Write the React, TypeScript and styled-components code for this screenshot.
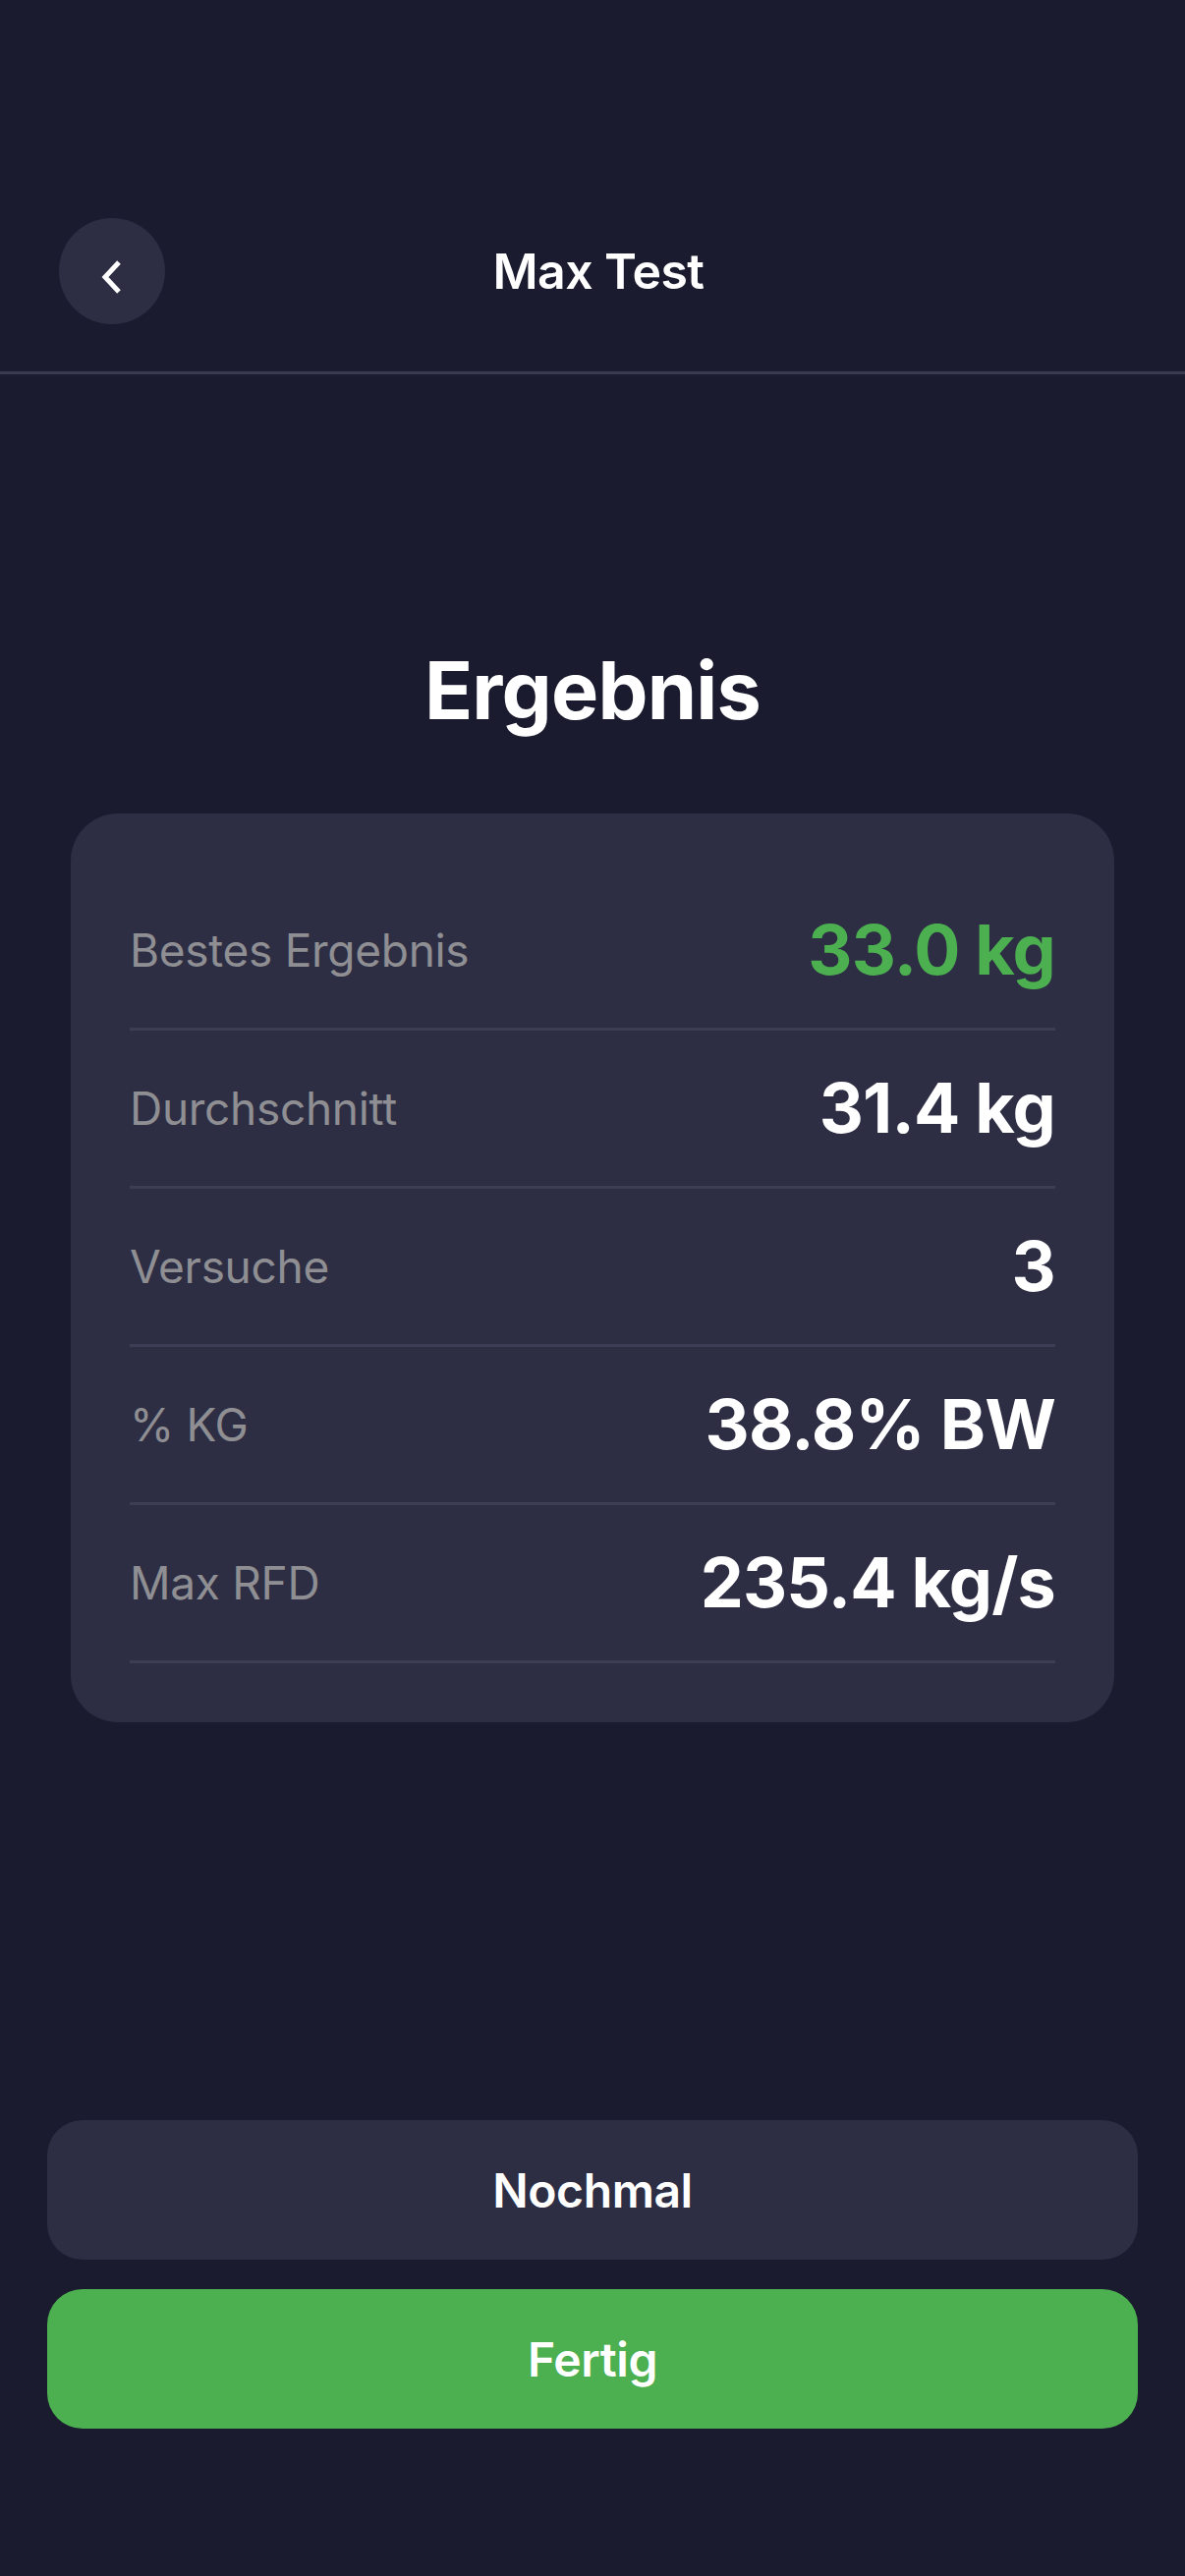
import React from "react";
import styled, { createGlobalStyle } from "styled-components";

type Stat = {
  label: string;
  value: string;
  highlight?: boolean;
};

const stats: Stat[] = [
  { label: "Bestes Ergebnis", value: "33.0 kg", highlight: true },
  { label: "Durchschnitt", value: "31.4 kg" },
  { label: "Versuche", value: "3" },
  { label: "% KG", value: "38.8% BW" },
  { label: "Max RFD", value: "235.4 kg/s" },
];

function App() {
  return (
    <>
      <GlobalStyle />
      <Screen>
        <Header>
          <BackButton aria-label="Zurück">
            <svg width="30" height="40" viewBox="0 0 30 40">
              <polyline
                points="22,5 8,20 22,35"
                fill="none"
                stroke="#ffffff"
                strokeWidth="5"
                strokeLinecap="butt"
                strokeLinejoin="miter"
              />
            </svg>
          </BackButton>
          <HeaderTitle>Max Test</HeaderTitle>
          <HeaderSpacer />
        </Header>

        <Main>
          <Title>Ergebnis</Title>
          <Card>
            {stats.map((stat, idx) => (
              <Row key={idx}>
                <Label>{stat.label}</Label>
                <Value highlight={stat.highlight}>{stat.value}</Value>
              </Row>
            ))}
          </Card>
        </Main>

        <Actions>
          <ActionButton variant="secondary">Nochmal</ActionButton>
          <ActionButton variant="primary">Fertig</ActionButton>
        </Actions>
      </Screen>
    </>
  );
}

const GlobalStyle = createGlobalStyle`
  html, body {
    margin: 0;
    padding: 0;
    background: #1a1b2e;
  }
  body {
    font-family: Inter, "Noto Sans", "Liberation Sans", sans-serif;
    color: #ffffff;
  }
  * {
    box-sizing: border-box;
  }
`;

const Screen = styled.div`
  width: 1206px;
  height: 2622px;
  display: flex;
  flex-direction: column;
  background: #1a1b2e;
  padding-top: 186px;
`;

const Header = styled.header`
  display: flex;
  align-items: center;
  justify-content: space-between;
  padding: 36px 60px 48px 60px;
  border-bottom: 3px solid #3a3b50;
`;

const BackButton = styled.button`
  width: 108px;
  height: 108px;
  border-radius: 50%;
  border: none;
  background: #2d2e44;
  display: flex;
  align-items: center;
  justify-content: center;
  padding: 12px 0 0 0;
  cursor: pointer;
`;

const HeaderTitle = styled.h1`
  margin: 0;
  font-size: 50px;
  font-weight: 600;
  letter-spacing: -0.6px;
  color: #ffffff;
`;

const HeaderSpacer = styled.div`
  width: 96px;
  height: 108px;
`;

const Main = styled.main`
  flex: 1;
  display: flex;
  flex-direction: column;
  align-items: center;
  padding: 274px 72px 0 72px;
`;

const Title = styled.h2`
  margin: 0;
  font-size: 81px;
  line-height: 1.2;
  font-weight: 700;
  letter-spacing: -0.8px;
  color: #ffffff;
`;

const Card = styled.section`
  margin-top: 76px;
  width: 100%;
  background: #2d2e44;
  border-radius: 48px;
  padding: 60px;
  display: flex;
  flex-direction: column;
`;

const Row = styled.div`
  height: 161px;
  display: flex;
  align-items: center;
  justify-content: space-between;
  border-bottom: 3px solid #3d3e55;
`;

const Label = styled.span`
  font-size: 46px;
  line-height: 1.2;
  font-weight: 400;
  color: #8e8e93;
  letter-spacing: -0.3px;
`;

const Value = styled.span<{ highlight?: boolean }>`
  font-size: 70px;
  line-height: 1.2;
  font-weight: 700;
  letter-spacing: -0.8px;
  color: ${(props) => (props.highlight ? "#4caf50" : "#ffffff")};
`;

const Actions = styled.div`
  display: flex;
  flex-direction: column;
  gap: 30px;
  padding: 0 48px 150px 48px;
`;

const ActionButton = styled.button<{ variant: "primary" | "secondary" }>`
  height: 142px;
  width: 100%;
  border: none;
  border-radius: 36px;
  font-family: Inter, "Noto Sans", "Liberation Sans", sans-serif;
  font-size: 48px;
  font-weight: 600;
  letter-spacing: -0.4px;
  color: #ffffff;
  background: ${(props) => (props.variant === "primary" ? "#4caf50" : "#2d2e44")};
  cursor: pointer;
`;

export default App;
